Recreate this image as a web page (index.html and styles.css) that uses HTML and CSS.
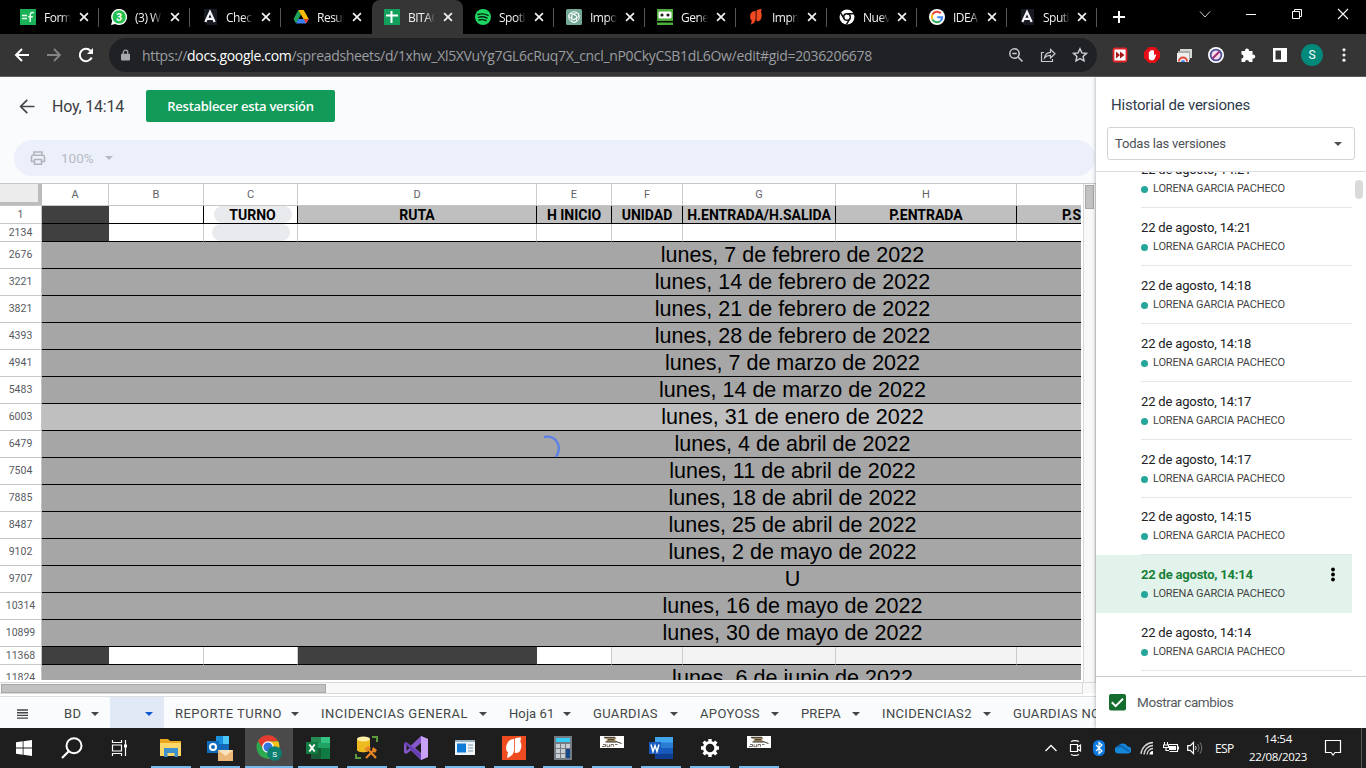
FILE: index.html
```html
<!DOCTYPE html>
<html lang="es">
<head>
<meta charset="utf-8">
<title>BITACORA</title>
<link rel="stylesheet" href="styles.css">
</head>
<body>
<svg class="defs" width="0" height="0">
  <symbol id="x" viewBox="0 0 10 10"><path d="M1.100 1.100l7.800 7.800M8.900 1.100L1.100 8.900" stroke="#f1f1f1" stroke-width="1.700"/></symbol>
  <symbol id="caret" viewBox="0 0 8 4"><path d="M0 0h8L4 4z" fill="currentColor"/></symbol>
  <symbol id="ang" viewBox="0 0 16 16"><path d="M2 0h13v16H5L2 9z" fill="#171923"/><path d="M3.300 13L8 2.800 12.700 13M5.300 9.800h5.400" fill="none" stroke="#f4f4fb" stroke-width="2.200"/></symbol>
  <symbol id="duster" viewBox="0 0 24 12"><path d="M0 0h24v12H0z" fill="#fff"/><path d="M4 1h11l1.500 1.200-1.500 1.600 1.500 2.200H5.500l2-2.500L4.500 2.500z" fill="#a08c68"/><path d="M4 1.300h11M5.500 6h11M8 3.700h6M16 5.500l5.500 2" stroke="#3d352b" stroke-width="1"/><path d="M2 10.500h3.500V8.500H3M7 8.300v2.400h2.500V8.300M11 10.700V8.500h2.500v2.200M15 8.500h2.500" stroke="#665f55" stroke-width=".9" fill="none"/></symbol>
</svg>

<header class="tabstrip">
  <div class="tab"><svg class="ico" viewBox="0 0 16 16"><path d="M0 0h16v16H0z" fill="#1bb157"/><path d="M2 6.500h5M2 9.500h5M13.800 3.800c-2.800-.8-3.600.3-3.600 2.700V13M8.200 7.800h4.600" fill="none" stroke="#e8fff0" stroke-width="1.500"/></svg><span class="ttl">Form</span><svg class="cls"><use href="#x"/></svg></div>
  <div class="tab"><svg class="ico" viewBox="0 0 16 16"><path d="M0 16l1.200-4A8 8 0 1 1 4.300 15z" fill="#fff"/><circle cx="8.200" cy="7.900" r="6.700" fill="#25c04f"/><text class="wa" x="8.200" y="11.500">3</text></svg><span class="ttl">(3) W</span><svg class="cls"><use href="#x"/></svg></div>
  <div class="tab"><svg class="ico"><use href="#ang"/></svg><span class="ttl">Chec</span><svg class="cls"><use href="#x"/></svg></div>
  <div class="tab nosep"><svg class="ico" viewBox="0 0 16 16"><path d="M5.300 1L0.500 10l2.500 4.500L8 5.500z" fill="#20a35a"/><path d="M5.300 1h5.400l5 9h-5.200z" fill="#fbbc05"/><path d="M5.500 10h10.300L13 14.500H3z" fill="#3a7ff0"/><path d="M13 14.500l2.700-4.500h-5.200z" fill="#ea4335"/></svg><span class="ttl">Resul</span><svg class="cls"><use href="#x"/></svg></div>
  <div class="tab active nosep"><svg class="ico" viewBox="0 0 16 16"><path d="M0 0h16v16H0z" fill="#12a05c"/><path d="M7.500 2v12M2 6.500h12" stroke="#fff" stroke-width="2"/></svg><span class="ttl">BITAC</span><svg class="cls"><use href="#x"/></svg></div>
  <div class="tab"><svg class="ico" viewBox="0 0 16 16"><circle cx="8" cy="8" r="8" fill="#1ed760"/><path d="M3 5.500c4-1.200 7-.8 10 .8M3.500 8.300c3.300-1 6-.6 8.500.8M4 11c3-.8 5-.4 7 .7" fill="none" stroke="#06220f" stroke-width="1.400" stroke-linecap="round"/></svg><span class="ttl">Spoti</span><svg class="cls"><use href="#x"/></svg></div>
  <div class="tab"><svg class="ico" viewBox="0 0 16 16"><rect width="16" height="16" rx="1.500" fill="#74a896"/><g fill="none" stroke="#fff" stroke-width=".9"><path d="M8 5.300l2.600 1.500v4.300c0 3-4.700 3-4.700.2V6.700"/><path d="M8 5.300l2.600 1.500v4.300c0 3-4.700 3-4.700.2V6.700" transform="rotate(120 8 8)"/><path d="M8 5.300l2.600 1.500v4.300c0 3-4.700 3-4.700.2V6.700" transform="rotate(240 8 8)"/><circle cx="8" cy="8" r="5.300"/></g></svg><span class="ttl">Impo</span><svg class="cls"><use href="#x"/></svg></div>
  <div class="tab"><svg class="ico" viewBox="0 0 16 16"><path d="M0 0h16v12H0zM0 13.500h16V16H0z" fill="#4caf3c"/><rect x="1.500" y="2.500" width="13" height="7" rx="1.500" fill="#fff"/><circle cx="5" cy="6" r="1.600" fill="#222"/><circle cx="11" cy="6" r="1.600" fill="#222"/></svg><span class="ttl">Gene</span><svg class="cls"><use href="#x"/></svg></div>
  <div class="tab"><svg class="ico" viewBox="0 0 16 16"><path d="M2.500 5C3.300 3 5 2 7.700 2v7.500c-.2 3-1.500 4.800-4.700 6l.7-4.200C2 10.500 1.800 7 2.500 5zM8.500 1.500C10 .5 11.500 0 13.500 0L13 3.500c1.200.8.900 5-.3 7-1 1.500-2.700 2-4.200 1.500z" fill="#f14a22"/></svg><span class="ttl">Impri</span><svg class="cls"><use href="#x"/></svg></div>
  <div class="tab n"><svg class="ico" viewBox="0 0 16 16"><circle cx="8" cy="8" r="7.500" fill="#fff"/><g fill="none" stroke="#111" stroke-width="1.500"><circle cx="8" cy="8" r="3.300"/><path d="M8 4.700h7M5.100 9.600L1.700 4M10.900 9.600L7.500 15.300"/></g></svg><span class="ttl">Nuev</span><svg class="cls"><use href="#x"/></svg></div>
  <div class="tab n"><svg class="ico" viewBox="0 0 16 16"><circle cx="8" cy="8" r="8" fill="#fff"/><g fill="none" stroke-width="2"><path d="M11.800 4.300A5.200 5.200 0 0 0 3.400 5.600" stroke="#ea4335"/><path d="M3.400 5.600a5.200 5.200 0 0 0 0 4.800" stroke="#fbbc05"/><path d="M3.400 10.400a5.200 5.200 0 0 0 7.700 1.800" stroke="#34a853"/><path d="M11.100 12.200A5 5 0 0 0 13.200 8.200H8.200" stroke="#4285f4"/></g></svg><span class="ttl">IDEA</span><svg class="cls"><use href="#x"/></svg></div>
  <div class="tab n"><svg class="ico"><use href="#ang"/></svg><span class="ttl">Sputi</span><svg class="cls"><use href="#x"/></svg></div>
  <svg class="plus" viewBox="0 0 12 12"><path d="M6 0v12M0 6h12" stroke="#fff" stroke-width="2"/></svg>
  <div class="wincontrols">
    <svg viewBox="0 0 12 12"><path d="M1 3.500l5 5.500 5-5.500" fill="none" stroke="#ccc"/></svg>
    <svg viewBox="0 0 12 12"><path d="M1 6.500h10" stroke="#fff"/></svg>
    <svg viewBox="0 0 12 12"><path d="M1.500 3.500h7v7h-7zM3.500 3.500v-2h7v7h-2" fill="none" stroke="#fff"/></svg>
    <svg viewBox="0 0 12 12"><path d="M1 1l10 10M11 1L1 11" stroke="#fff" stroke-width="1.100"/></svg>
  </div>
</header>

<nav class="toolbar">
  <div class="nav">
    <svg viewBox="0 0 16 16"><path d="M15 8H2M8 2L2 8l6 6" fill="none" stroke="#fff" stroke-width="2"/></svg>
    <svg viewBox="0 0 16 16"><path d="M1 8h13M8 2l6 6-6 6" fill="none" stroke="#858585" stroke-width="1.800"/></svg>
    <svg viewBox="0 0 16 16"><path d="M13.700 10.500A6.200 6.200 0 1 1 12.500 3.700" fill="none" stroke="#fff" stroke-width="2"/><path d="M15 1v6H9z" fill="#fff"/></svg>
  </div>
  <div class="omnibox">
    <svg class="lock" viewBox="0 0 10 12"><path d="M1 4.500h8a1 1 0 0 1 1 1V11a1 1 0 0 1-1 1H1a1 1 0 0 1-1-1V5.500a1 1 0 0 1 1-1z" fill="#a6a8ab"/><path d="M2.500 5V3.200a2.500 2.500 0 0 1 5 0V5" fill="none" stroke="#a6a8ab" stroke-width="1.400"/></svg>
    <span class="url">https://<b>docs.google.com</b>/spreadsheets/d/1xhw_Xl5XVuYg7GL6cRuq7X_cncl_nP0CkyCSB1dL6Ow/edit#gid=2036206678</span>
    <div class="oicons">
      <svg viewBox="0 0 16 16"><circle cx="6.500" cy="6.500" r="4.700"/><path d="M10 10l4.500 4.500M4.300 6.500h4.400"/></svg>
      <svg viewBox="0 0 16 16"><path d="M4 5.500H1.500v9h11V12M4.500 11c.5-4 3-5.500 6-5.700V2.500l4.500 4.300L10.500 11V8.300C8 8.300 6 9 4.500 11z" stroke-width="1.200"/></svg>
      <svg viewBox="0 0 16 16"><path d="M8 1.800l1.900 4.100 4.500.5-3.300 3 .9 4.400L8 11.600l-4 2.200.9-4.400-3.300-3 4.500-.5z"/></svg>
    </div>
  </div>
  <div class="exts">
    <svg viewBox="0 0 16 16"><rect x="1.500" y="1.500" width="13" height="13" rx="1.500" fill="#fff" stroke="#df2429" stroke-width="1.800"/><path d="M4 4.500L8 8l-4 3.500zM8 4.500L12.500 8 8 11.500z" fill="#a61519"/></svg>
    <svg viewBox="0 0 16 16"><path d="M5 0h6l5 5v6l-5 5H5l-5-5V5z" fill="#e80d15"/><path d="M4.800 9V4.700h1.300V8V3.500h1.300V7.500V2.900h1.300v4.600V3.600H10v5l1-1.300 1.200.5-1.600 4.200c-1 2-5.600 1.800-5.800-1z" fill="#fff"/></svg>
    <svg viewBox="0 0 16 16"><path d="M4 2h12v9H4z" fill="#d7d7d5"/><path d="M2 4h12v9H2z" fill="#a9b1a9"/><path d="M1 6h12v9H1z" fill="#eee"/><path d="M3 14.500a4 4 0 0 1 8 0" fill="none" stroke="#e24b3c" stroke-width="2"/><path d="M5 15a2 2 0 0 1 4 0" fill="#4285f4"/></svg>
    <svg viewBox="0 0 16 16"><circle cx="8" cy="8" r="8" fill="#fff"/><circle cx="8" cy="8" r="5.400" fill="#f6dcea" stroke="#4a4c99" stroke-width="1.800"/><path d="M4.500 11.500l7-7" stroke="#9b2c74" stroke-width="2"/></svg>
    <svg viewBox="0 0 16 16"><path d="M1.500 4h3.600a2 2 0 1 1 3.800 0h3.600v3.700a2 2 0 1 1 0 3.700V15H9a2 2 0 1 0-4 0H1.500v-3.500a2 2 0 1 0 0-4z" fill="#fff"/></svg>
    <svg viewBox="0 0 16 16"><path d="M1 1h14v14H1zM3.500 3.500v9H9v-9z" fill="#fff" fill-rule="evenodd"/></svg>
    <span class="avatar">S</span>
    <svg viewBox="0 0 16 16" fill="#eee"><circle cx="8" cy="2.800" r="1.600"/><circle cx="8" cy="8" r="1.600"/><circle cx="8" cy="13.200" r="1.600"/></svg>
  </div>
</nav>

<main class="app">
  <section class="editor">
    <div class="vhead">
      <svg class="back" viewBox="0 0 16 16"><path d="M15.500 8.500H2M8.300 1.800L1.600 8.500l6.700 6.700" fill="none" stroke="#444746" stroke-width="1.700"/></svg>
      <span class="when">Hoy, 14:14</span>
      <button class="restore">Restablecer esta versión</button>
    </div>
    <div class="pill">
      <svg viewBox="0 0 16 14"><path d="M4 4V1h8v3M4 10.500H1.500V6Q1.500 4.300 3 4.300H13Q14.500 4.300 14.500 6V10.500H12M4.500 8.500h7v4.800h-7z" fill="none" stroke="#b0b4bd" stroke-width="1.600"/></svg>
      <span>100%</span><svg class="car"><use href="#caret"/></svg>
    </div>
    <div class="gridwrap">
      <div class="grid">
        <div class="row cols"><i class="corner"></i><i>A</i><i>B</i><i>C</i><i>D</i><i>E</i><i>F</i><i>G</i><i>H</i><i></i></div>
        <div class="row titles"><i class="rh">1</i><i class="dark"></i><i></i><i><span class="chip">TURNO</span></i><i class="g">RUTA</i><i class="g">H INICIO</i><i class="g">UNIDAD</i><i class="g">H.ENTRADA/H.SALIDA</i><i class="g">P.ENTRADA</i><i class="g last">P.S</i></div>
        <div class="row thin"><i class="rh">2134</i><i class="dark"></i><i></i><i><span class="chip low"></span></i><i></i><i></i><i></i><i></i><i></i><i></i></div>
        <div class="date"><i class="rh">2676</i><p>lunes, 7 de febrero de 2022</p></div>
        <div class="date"><i class="rh">3221</i><p>lunes, 14 de febrero de 2022</p></div>
        <div class="date"><i class="rh">3821</i><p>lunes, 21 de febrero de 2022</p></div>
        <div class="date"><i class="rh">4393</i><p>lunes, 28 de febrero de 2022</p></div>
        <div class="date"><i class="rh">4941</i><p>lunes, 7 de marzo de 2022</p></div>
        <div class="date"><i class="rh">5483</i><p>lunes, 14 de marzo de 2022</p></div>
        <div class="date light"><i class="rh">6003</i><p>lunes, 31 de enero de 2022</p></div>
        <div class="date"><i class="rh">6479</i><p>lunes, 4 de abril de 2022</p></div>
        <div class="date"><i class="rh">7504</i><p>lunes, 11 de abril de 2022</p></div>
        <div class="date"><i class="rh">7885</i><p>lunes, 18 de abril de 2022</p></div>
        <div class="date"><i class="rh">8487</i><p>lunes, 25 de abril de 2022</p></div>
        <div class="date"><i class="rh">9102</i><p>lunes, 2 de mayo de 2022</p></div>
        <div class="date"><i class="rh">9707</i><p>U</p></div>
        <div class="date"><i class="rh">10314</i><p>lunes, 16 de mayo de 2022</p></div>
        <div class="date"><i class="rh">10899</i><p>lunes, 30 de mayo de 2022</p></div>
        <div class="row thin"><i class="rh">11368</i><i class="dark"></i><i></i><i></i><i class="dark"></i><i></i><i class="f"></i><i class="f"></i><i class="f"></i><i class="f"></i></div>
        <div class="date"><i class="rh">11824</i><p>lunes, 6 de junio de 2022</p></div>
        <svg class="spinner" viewBox="0 0 18 24"><path d="M1 2C13 0 20 11 13 22" fill="none" stroke="#5b80e6" stroke-width="2.300"/></svg>
      </div>
      <div class="vscroll"><div></div></div>
    </div>
    <div class="hscroll"><div class="track"><div></div></div><div class="end"></div></div>
    <div class="sheets">
      <svg class="menu" viewBox="0 0 11 10"><path d="M0 1h11M0 3.700h11M0 6.400h11M0 9.100h11" stroke="#444746" stroke-width="1.400"/></svg>
      <div class="sh w1"><span>BD</span><svg><use href="#caret"/></svg></div>
      <div class="sh w2 on"><span></span><svg><use href="#caret"/></svg></div>
      <div class="sh w3"><span>REPORTE TURNO</span><svg><use href="#caret"/></svg></div>
      <div class="sh w4"><span>INCIDENCIAS GENERAL</span><svg><use href="#caret"/></svg></div>
      <div class="sh w5"><span>Hoja 61</span><svg><use href="#caret"/></svg></div>
      <div class="sh w6"><span>GUARDIAS</span><svg><use href="#caret"/></svg></div>
      <div class="sh w7"><span>APOYOSS</span><svg><use href="#caret"/></svg></div>
      <div class="sh w8"><span>PREPA</span><svg><use href="#caret"/></svg></div>
      <div class="sh w9"><span>INCIDENCIAS2</span><svg><use href="#caret"/></svg></div>
      <div class="sh w10"><span>GUARDIAS NO</span></div>
    </div>
  </section>

  <aside class="side">
    <div class="shead">
      <h1>Historial de versiones</h1>
      <div class="select"><span>Todas las versiones</span><svg><use href="#caret"/></svg></div>
    </div>
    <div class="list">
      <div class="items">
        <div class="item"><p>22 de agosto, 14:21</p><small>LORENA GARCIA PACHECO</small></div>
        <div class="item"><p>22 de agosto, 14:21</p><small>LORENA GARCIA PACHECO</small></div>
        <div class="item"><p>22 de agosto, 14:18</p><small>LORENA GARCIA PACHECO</small></div>
        <div class="item"><p>22 de agosto, 14:18</p><small>LORENA GARCIA PACHECO</small></div>
        <div class="item"><p>22 de agosto, 14:17</p><small>LORENA GARCIA PACHECO</small></div>
        <div class="item"><p>22 de agosto, 14:17</p><small>LORENA GARCIA PACHECO</small></div>
        <div class="item short"><p>22 de agosto, 14:15</p><small>LORENA GARCIA PACHECO</small></div>
        <div class="item sel"><p>22 de agosto, 14:14</p><small>LORENA GARCIA PACHECO</small><svg class="kebab" viewBox="0 0 4 14"><circle cx="2" cy="2" r="1.900"/><circle cx="2" cy="7" r="1.900"/><circle cx="2" cy="12" r="1.900"/></svg></div>
        <div class="item"><p>22 de agosto, 14:14</p><small>LORENA GARCIA PACHECO</small></div>
      </div>
      <div class="thumb"></div>
    </div>
    <div class="sfoot"><svg viewBox="0 0 17 17"><rect width="17" height="16.500" rx="2" fill="#146c2e"/><path d="M2.800 8.300l3.800 3.800 7.400-7.400" fill="none" stroke="#fff" stroke-width="2"/></svg><span>Mostrar cambios</span></div>
  </aside>
</main>

<footer class="taskbar">
  <div class="sys">
    <svg viewBox="0 0 16 16"><path d="M0 2.300l6.700-1v6.300H0zM7.500 1.200L16 0v7.600H7.500zM0 8.400h6.700v6.300L0 13.700zM7.500 8.400H16V16l-8.500-1.200z" fill="#fff"/></svg>
    <svg class="big" viewBox="0 0 22 22"><circle cx="13" cy="8.700" r="7.500" fill="none" stroke="#fff" stroke-width="2"/><path d="M8 14L1 21" stroke="#fff" stroke-width="2.200"/></svg>
    <svg class="view" viewBox="0 0 17 16"><path d="M1.500 0v2.500h9V0M1.500 16v-2.500h9V16M1.500 5h9v6h-9zM14.500 0v16" fill="none" stroke="#fff" stroke-width="1.200"/><path d="M13 4.500h3v3h-3z" fill="#fff"/></svg>
  </div>
  <div class="apps">
    <span><svg viewBox="0 0 24 24"><path d="M1 3h8l2 2h11v15H1z" fill="#e9a820"/><path d="M1 7h21v13H1z" fill="#ffd768"/><path d="M5 12h14v9h-3.500v-4h-7v4H5z" fill="#3e91cd"/></svg></span>
    <span><svg class="lg" viewBox="0 0 26 26"><path d="M9 1h13v15H9z" fill="#1468b8"/><path d="M9 1h7v8H9z" fill="#1890dd"/><path d="M16 1h6v8h-6z" fill="#4dc6fa"/><path d="M0 6h12v12H0z" fill="#0f6cbd"/><circle cx="6" cy="12" r="3" fill="none" stroke="#fff" stroke-width="2"/><path d="M11 15h15v11H11z" fill="#eab777"/><path d="M11 15l7.500 6 7.500-6" fill="#fbe2bd"/></svg></span>
    <span class="cur"><svg viewBox="0 0 26 26"><circle cx="12" cy="12" r="11.500" fill="#2da94f"/><path d="M2 6a11.500 11.500 0 0 1 20 0l-10 1-4 8z" fill="#e53b2e"/><path d="M12 6.500h10.200c3.300 6-1 17-10.200 17l5-8z" fill="#fbc116"/><circle cx="12" cy="12" r="5.800" fill="#fff"/><circle cx="12" cy="12" r="4.500" fill="#3475e0"/><circle cx="18.500" cy="18.500" r="7.300" fill="#0b8070"/><text class="badge" x="18.500" y="21.500">S</text></svg></span>
    <span><svg viewBox="0 0 24 24"><path d="M5 1h19v22H5z" fill="#21a366"/><path d="M5 1h10v6H5z" fill="#238c52"/><path d="M15 1h9v6h-9z" fill="#33c481"/><path d="M5 12h10v11H5z" fill="#185c37"/><path d="M15 12h9v11h-9z" fill="#107c41"/><path d="M0 6h12v12H0z" fill="#107c41"/><path d="M3.300 8.500l5.400 7M8.700 8.500l-5.400 7" stroke="#fff" stroke-width="2"/></svg></span>
    <span><svg viewBox="0 0 24 24"><path d="M2 3v11c0 3 13 3 13 0V3z" fill="#edbb20"/><ellipse cx="8.500" cy="3" rx="6.500" ry="2.500" fill="#fff0a6"/><path d="M17 1h5v5M1 18v4h5" fill="none" stroke="#5c9b3b" stroke-width="2"/><path d="M12 12l9 10M20 13l-9 9" stroke="#1e1e1e" stroke-width="4"/><path d="M12 12l9 10M20 13l-9 9" stroke="#e78623" stroke-width="2.200"/><path d="M9 13l4-3 3 2-4 4zM18 11l4 3-2 3-3-3z" fill="#e78623"/></svg></span>
    <span><svg viewBox="0 0 24 24"><path d="M17 0l7 3v18l-7 3L7 14.500 2 18l-2-1.500v-9L2 6l5 3.500z" fill="#8458c8"/><path d="M17 0l7 3v18l-7 3z" fill="#c9a1f7"/><path d="M2 6l15 12V24L0 7.500z" fill="#6740b5"/><path d="M17 7v10l-6-5z" fill="#1e1e1e"/><path d="M2.500 9v6l3-3z" fill="#1e1e1e"/></svg></span>
    <span><svg viewBox="0 0 24 24"><path d="M2 4h20v15H2z" fill="#eef5fa"/><path d="M2 4h20v2H2z" fill="#9ab1c1"/><path d="M4 7.500h9v9H4z" fill="#0f7bd6"/><path d="M15 9h5M15 12h5M15 15h5" stroke="#8496a3"/></svg></span>
    <span><svg viewBox="0 0 24 24"><path d="M0 0h24v24H0z" fill="#ee4b20"/><path d="M5.500 7C7 4 9 3 12 3v11.500c-.3 3.500-2.500 6-7 7.500l1-6c-2.500-1-2.500-6-.5-9zM12.800 2.500C14.500 1.500 16.500 1.500 19 1.500L18.300 6c1.700 1.500 1.200 7-.5 9.300-1.200 1.500-3 2-5 1.500z" fill="#fff"/></svg></span>
    <span><svg viewBox="0 0 24 24"><path d="M3 0h18v24H3z" fill="#747b82"/><path d="M5 2h14v4H5z" fill="#38cdf4"/><path d="M5 8h4v4H5zM10 8h4v4h-4zM15 8h4v4h-4zM5 13h4v4H5zM10 13h4v4h-4zM5 18h4v4H5zM10 18h4v4h-4z" fill="#c9ced2"/><path d="M15 13h4v9h-4z" fill="#17488a"/></svg></span>
    <span class="up"><svg class="dust"><use href="#duster"/></svg></span>
    <span><svg viewBox="0 0 24 24"><path d="M6 1h18v22H6z" fill="#2b7cd3"/><path d="M6 1h18v5.500H6z" fill="#41a5ee"/><path d="M6 12h18v5.500H6z" fill="#185abd"/><path d="M6 17.500h18V23H6z" fill="#103f91"/><path d="M0 6h12v12H0z" fill="#185abd"/><path d="M2 8.500l2 7 2-6 2 6 2-7" fill="none" stroke="#fff" stroke-width="1.500"/></svg></span>
    <span><svg viewBox="0 0 24 24"><circle cx="12" cy="12" r="5.700" fill="none" stroke="#fff" stroke-width="2.800"/><path d="M12 3v3M12 18v3M3 12h3M18 12h3M5.600 5.600l2.200 2.200M16.200 16.200l2.200 2.200M18.400 5.600l-2.200 2.200M7.800 16.200l-2.200 2.200" stroke="#fff" stroke-width="3.400"/></svg></span>
    <span class="up"><svg class="dust"><use href="#duster"/></svg></span>
  </div>
  <div class="tray">
    <svg viewBox="0 0 16 16"><path d="M2.500 11L8 5.500l5.500 5.500" fill="none" stroke="#fff" stroke-width="1.300"/></svg>
    <svg viewBox="0 0 16 16"><path d="M3.500 4.500h7v7h-7zM10.500 7l3-2v6l-3-2M4 1.500q4-1.800 8 0M4 14.500q4 1.800 8 0" fill="none" stroke="#fff" stroke-width="1.200"/></svg>
    <svg viewBox="0 0 16 16"><rect x="2" y="0" width="12" height="16" rx="5.500" fill="#0a78e0"/><path d="M5 5l6 6-3 2.500V2.500L11 5l-6 6" fill="none" stroke="#fff" stroke-width="1.200"/></svg>
    <svg viewBox="0 0 16 16"><path d="M3.500 13.500a3.500 3.500 0 0 1-.5-7 5.300 5.300 0 0 1 9.500 0 3.500 3.500 0 0 1 .5 7z" fill="#1686d9"/><path d="M2 7.500a4 4 0 0 1 5-1l7.500 5" fill="none" stroke="#0b63b2" stroke-width="2"/></svg>
    <svg viewBox="0 0 16 16"><path d="M2 14A12.500 12.500 0 0 1 14 2.500M5 14.500A9.500 9.500 0 0 1 14 5.500M8 14.500A6.500 6.500 0 0 1 14 8.500" fill="none" stroke="#d8d8d8" stroke-width="1.300"/><path d="M10.500 14.500a3.500 3.500 0 0 1 3.500-3.500v3.500z" fill="#fff"/></svg>
    <svg viewBox="0 0 16 16"><path d="M5.500 4.500h9v7h-8M15.500 6.500v3M1.500 2v3M4.500 2v3M.5 5h5v2.500H.5zM3 7v3.500h3" fill="none" stroke="#fff" stroke-width="1.100"/><path d="M6 6h7v4H6z" fill="#fff"/></svg>
    <svg viewBox="0 0 16 16"><path d="M.7 5.700h2.500L6.500 2.500v11L3.200 10.300H.7z" fill="none" stroke="#fff" stroke-width="1.200"/><path d="M8.500 6q1.200 2 0 4" fill="none" stroke="#ddd"/><path d="M10.800 4q2.500 4 0 8M13 2.500q3.500 5.500 0 11" fill="none" stroke="#777"/></svg>
    <span class="lang">ESP</span>
    <span class="clock">14:54<br>22/08/2023</span>
    <svg class="note" viewBox="0 0 18 18"><path d="M1.500 1.500h15v12H11L9 16l-2-2.500H1.500z" fill="none" stroke="#fff" stroke-width="1.200"/></svg>
    <i class="peek"></i>
  </div>
</footer>
</body>
</html>
```
FILE: styles.css
```css
* { box-sizing: border-box; }
body { margin: 0; width: 1366px; height: 768px; overflow: hidden; font-family: Roboto, sans-serif; display: flex; flex-direction: column; background: #fff; }
svg { display: block; flex: none; }
i { font-style: normal; }
p, h1 { margin: 0; }
.defs { position: absolute; }

/* browser tabs */
.tabstrip { height: 34px; background: #000; display: flex; flex: none; padding-left: 8px; font-family: "Open Sans", sans-serif; }
.tab { width: 91px; flex: none; display: flex; align-items: center; padding-left: 12px; background: linear-gradient(#555, #555) right 0 top 8px / 1px 19px no-repeat; }
.tab.n { width: 90px; }
.tab.nosep { background: none; }
.tab.active { background: #353535; border-radius: 8px 8px 0 0; }
.ico { width: 16px; height: 16px; }
.wa { font: bold 10px Roboto, sans-serif; fill: #fff; text-anchor: middle; }
.ttl { margin-left: 8px; width: 27px; overflow: hidden; white-space: nowrap; font-size: 12px; letter-spacing: -.5px; color: #f1f1f1; mask-image: linear-gradient(90deg, #000 65%, transparent); }
.cls { width: 10px; height: 10px; margin-left: 8px; }
.n .cls { margin-left: 7px; }
.plus { width: 12px; height: 12px; margin: 11px 0 0 16px; }
.wincontrols { margin: 8px 17px 0 auto; display: flex; gap: 34px; }
.wincontrols svg { width: 12px; height: 12px; }

/* address bar */
.toolbar { height: 43px; flex: none; background: #353535; border-bottom: 1px solid #5e5e60; display: flex; align-items: center; }
.nav { width: 109px; display: flex; gap: 16px; padding-left: 14px; }
.nav svg { width: 16px; height: 16px; }
.omnibox { width: 988px; height: 34px; border-radius: 17px; background: #202124; display: flex; align-items: center; padding-left: 12px; }
.lock { width: 9px; height: 12px; }
.url { margin-left: 12px; font: 14px "Open Sans", sans-serif; letter-spacing: -.33px; color: #9a9da1; white-space: nowrap; }
.url b { font-weight: 400; color: #fff; }
.oicons { margin: 0 9px 0 auto; display: flex; gap: 16px; }
.oicons svg { width: 16px; height: 16px; fill: none; stroke: #c7c9cc; stroke-width: 1.5; }
.exts { display: flex; align-items: center; margin-left: 15px; gap: 16px; }
.exts svg { width: 16px; height: 16px; }
.avatar { width: 22px; height: 22px; margin: 0 -3px; border-radius: 50%; background: #00897b; color: #fff; font-size: 12px; line-height: 22px; text-align: center; }

/* version header */
.app { height: 651px; flex: none; display: flex; }
.editor { width: 1096px; background: #f9fbfd; display: flex; flex-direction: column; overflow: hidden; }
.vhead { height: 58px; flex: none; display: flex; align-items: center; padding-left: 19px; }
.back { width: 16px; height: 16px; }
.when { margin-left: 17px; width: 94px; font-size: 16px; color: #3c4043; letter-spacing: -.2px; white-space: nowrap; }
.restore { width: 189px; height: 32px; border: 0; padding: 0 0 1px; border-radius: 2px; background: #129b58; color: #fff; font: 600 13px "Open Sans", sans-serif; letter-spacing: -.28px; }
.pill { height: 36px; flex: none; margin: 5px 1px 7px 14px; border-radius: 18px; background: #ecf0fa; display: flex; align-items: center; padding-left: 16px; color: #b6bac3; font-size: 13.5px; }
.pill svg { width: 16px; height: 14px; }
.pill span { margin-left: 15px; width: 32px; }
.pill .car { width: 8px; height: 4px; margin-left: 12px; }

/* spreadsheet */
.gridwrap { height: 499px; flex: none; border-top: 1px solid #c6c8ca; background: #fff; display: flex; }
.grid { position: relative; width: 1081px; height: 497px; overflow: hidden; margin-top: -1px; padding-top: 1px; }
.row { display: grid; grid-template-columns: 42px 67px 95px 94px 239px 75px 71px 153px 181px 64px; }
.row i { display: flex; align-items: center; justify-content: center; border-right: 1px solid #ccc; }
.row i:last-child { border-right: 0; }
.cols { height: 22px; font-size: 11px; color: #5f6368; border-bottom: 1px solid #c4c7c5; }
.cols .corner { background: #ececec; border-right: 4px solid #bcbcbc; border-bottom: 3px solid #bcbcbc; }
.rh { width: 42px; font-size: 10.5px; color: #575b5f; background: #fff; display: flex; align-items: center; justify-content: center; border-right: 1px solid #c4c7c5; border-bottom: 1px solid #c4c7c5; padding-bottom: 1px; flex: none; }
.row .rh { border-right: 1px solid #c4c7c5; border-bottom: 1px solid #c4c7c5; padding-bottom: 0; }
.titles, .thin { height: 18px; grid-template-rows: 18px; }
.titles i, .thin i { border-bottom: 1px solid #000; }
.titles i { border-right-color: #000; font-weight: 700; font-size: 14px; line-height: 16px; letter-spacing: -.02px; white-space: nowrap; color: #000; }
.titles .rh { font-weight: 400; font-size: 10.5px; color: #575b5f; }
.row .dark { background: #404040; border-right-color: #404040; }
.row .g { background: #bfbfbf; }
.row .f { background: #f3f3f3; }
.titles .last { justify-content: flex-end; }
.chip { width: 78px; height: 17px; margin-left: 4px; border-radius: 9px; background: #e8eaed; display: flex; align-items: center; justify-content: center; }
.chip.low { margin-left: 0; }
.date { height: 27px; display: flex; }
.date p { flex: 1; background: #a6a6a6; border-bottom: 1px solid #000; padding-left: 462px; text-align: center; font: 21.5px/26px "Liberation Sans", Arial, sans-serif; letter-spacing: .02px; color: #000; white-space: nowrap; }
.date.light p { background: #bfbfbf; }
.spinner { position: absolute; left: 543px; top: 252px; width: 18px; height: 24px; }
.vscroll { width: 15px; border-right: 1px solid #dadce0; padding: 1px 1px 0 4px; background: linear-gradient(90deg, #fff 2px, #d9d9d9 2px, #d9d9d9 3px, #f8f8f8 3px); }
.vscroll div { height: 24px; background: #c1c1c1; border: 1px solid #a8a8a8; }
.hscroll { height: 14px; flex: none; border-bottom: 3px solid #fff; display: flex; background: #f8f8f8; }
.track { width: 1083px; height: 12px; border: 1px solid #d9d9d9; border-left: 0; padding: 1px 0 0 1px; }
.track div { width: 325px; height: 9px; background: #c1c1c1; border: 1px solid #a8a8a8; }
.end { flex: 1; border-top: 1px solid #d9d9d9; }
.sheets { height: 32px; flex: none; border-top: 1px solid #dcdee0; display: flex; align-items: stretch; background: #f9fbfd; }
.menu { width: 11px; height: 10px; margin: 12px 25px 0 17px; }
.sh { flex: none; display: flex; align-items: center; justify-content: space-between; padding: 2px 11px 0; font-size: 13px; letter-spacing: .35px; color: #444746; white-space: nowrap; }
.sh svg { width: 8px; height: 4px; }
.sh.on { background: #e1e9f7; color: #0b57d0; }
.w1 { width: 57px; } .w2 { width: 54px; } .w3 { width: 146px; } .w4 { width: 188px; } .w5 { width: 84px; }
.w6 { width: 107px; } .w7 { width: 101px; } .w8 { width: 81px; } .w9 { width: 131px; } .w10 { width: 110px; }
.sh.w3, .sh.w4 { letter-spacing: .48px; }
.sh.w5, .sh.w8 { letter-spacing: .1px; }

/* version history */
.side { width: 270px; background: #fff; display: flex; flex-direction: column; box-shadow: -1px 0 3px rgba(60, 64, 67, .3); position: relative; }
.shead { height: 95px; flex: none; border-bottom: 1px solid #dadce0; padding: 18px 11px 0; }
h1 { font-size: 15px; font-weight: 400; line-height: 20px; color: #303b4c; padding-left: 4px; letter-spacing: -.22px; }
.select { margin-top: 12px; height: 33px; border: 1px solid #d0d3d7; border-radius: 3px; display: flex; align-items: center; justify-content: space-between; padding: 0 12px 0 7px; font-size: 13px; letter-spacing: -.2px; color: #4d5156; }
.select svg { width: 8px; height: 4px; }
.list { height: 504px; flex: none; overflow: hidden; display: flex; justify-content: space-between; }
.items { width: 256px; margin-top: -22px; }
.item { height: 58px; padding: 12px 0 0 45px; position: relative; background: linear-gradient(#e4e6e8, #e4e6e8) 45px 100% / 211px 1px no-repeat; }
.item.short { height: 57px; padding-top: 11px; }
.item p { font-size: 13px; line-height: 16px; letter-spacing: -.17px; color: #202124; white-space: nowrap; }
.item small { display: flex; align-items: center; gap: 5px; margin-top: 4px; font-size: 11px; line-height: 14px; letter-spacing: -.14px; color: #444; white-space: nowrap; }
.item small::before { content: ""; width: 7px; height: 7px; border-radius: 50%; background: #26a69a; }
.item.sel { background: #e2f3eb; }
.item.sel p { color: #188038; font-weight: 700; letter-spacing: -.2px; }
.kebab { position: absolute; left: 235px; top: 12px; width: 4px; height: 15px; }
.thumb { width: 8px; height: 19px; margin: 8px 3px 0 0; border-radius: 4px; background: #dadada; }
.sfoot { flex: 1; border-top: 1px solid #c8cacc; display: flex; align-items: center; padding: 0 0 1px 13px; gap: 11px; font-size: 13.5px; letter-spacing: -.4px; color: #55595e; }
.sfoot svg { width: 17px; height: 17px; }
.sfoot span { padding-bottom: 1px; }

/* taskbar */
.taskbar { height: 40px; flex: none; background: #1e1e1e; display: flex; }
.sys { width: 147px; display: flex; align-items: center; padding-left: 16px; }
.sys svg { width: 16px; height: 16px; }
.sys .big { width: 22px; height: 22px; margin: 0 28px 0 29px; }
.sys .view { width: 17px; }
.apps { display: flex; gap: 1px; }
.apps span { width: 48px; display: flex; align-items: center; justify-content: center; background: linear-gradient(#76b9ed, #76b9ed) center bottom / 40px 2px no-repeat; }
.apps span svg { width: 24px; height: 24px; }
.apps span .lg { width: 26px; height: 26px; }
.apps .cur { background: linear-gradient(#76b9ed, #76b9ed) center bottom / 48px 2px no-repeat #4a4a4a; }
.apps .cur svg { width: 26px; height: 26px; }
.apps .up { align-items: flex-start; padding-top: 8px; }
.apps span .dust { height: 12px; }
.badge { font: 8px Roboto, sans-serif; fill: #fff; text-anchor: middle; }
.tray { margin-left: auto; display: flex; align-items: center; gap: 8px; color: #fff; font: 12px "Open Sans", sans-serif; }
.tray svg { width: 16px; height: 16px; }
.lang { width: 20px; margin-left: 4px; letter-spacing: -.6px; }
.clock { width: 62px; margin-left: 4px; text-align: center; line-height: 18px; font-size: 11.5px; letter-spacing: -.3px; white-space: nowrap; }
.tray .note { width: 18px; height: 18px; margin-left: 7px; }
.peek { width: 5px; height: 40px; border-left: 1px solid #5a5a5a; margin-left: 11px; }
```
